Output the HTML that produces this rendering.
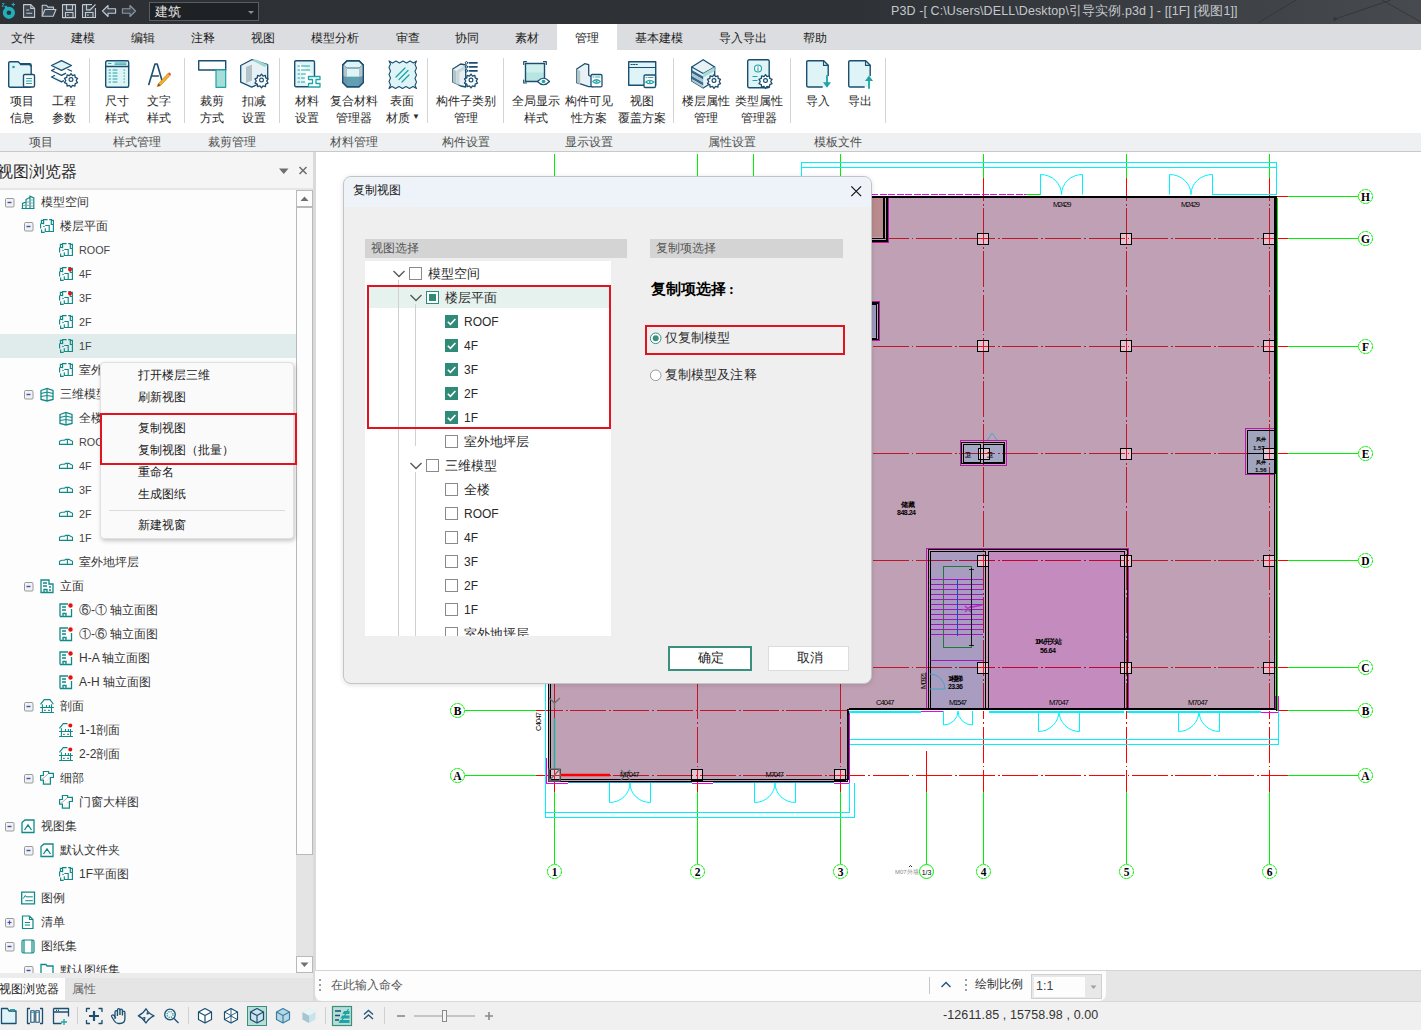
<!DOCTYPE html>
<html><head><meta charset="utf-8">
<style>
*{margin:0;padding:0;box-sizing:border-box}
html,body{width:1421px;height:1030px;overflow:hidden;background:#fff;font-family:"Liberation Sans",sans-serif;font-size:12px;color:#333}
.a{position:absolute}
svg{position:absolute;overflow:visible}
#title{left:0;top:0;width:1421px;height:24px;background:linear-gradient(90deg,#2d3135 0%,#2e3236 60%,#383c40 78%,#474b4f 100%);overflow:hidden}
#menu{left:0;top:24px;width:1421px;height:26px;background:#dcdde0}
#menu span{position:absolute;top:6px;font-size:12px;color:#1e1e1e;white-space:nowrap}
#ribbon{left:0;top:50px;width:1421px;height:83px;background:#fff}
#glabels{left:0;top:133px;width:1421px;height:19px;background:#eef0f1;border-bottom:1px solid #c9c9c9}
#glabels span{position:absolute;top:1px;font-size:12px;color:#505050;white-space:nowrap;transform:translateX(-50%)}
.rb{position:absolute;top:93px;font-size:12px;color:#2a2a2a;text-align:center;line-height:17px;white-space:nowrap;transform:translateX(-50%)}
.sep{position:absolute;top:58px;width:1px;height:65px;background:#d4d4d4}
.tr{font-size:12px;line-height:24px;color:#363636;white-space:nowrap}
.mi{font-size:12px;line-height:18px;color:#1a1a1a;white-space:nowrap}
.dt{font-size:12.5px;line-height:24px;color:#2a2a2a;white-space:nowrap}
.lt{font-size:12px}
.cb{position:absolute;width:13px;height:13px;border:1px solid #8a8a8a;background:#fff}
.cbc{position:absolute;width:13px;height:13px;background:#2f8a78}

</style></head><body>
<div id="title" class="a">
<svg width="1421" height="24" style="left:0;top:0">
 <g stroke="#34383c" stroke-width="1" fill="none"><path d="M1258 23L1296 0M1335 19L1391 0M1382 0L1421 22"/><circle cx="1335" cy="19" r="1.5" fill="#34383c"/></g>
 <!-- logo -->
 <circle cx="8.9" cy="12.8" r="4.2" fill="none" stroke="#1fb0bc" stroke-width="3.8"/>
 <rect x="4.8" y="5.8" width="2.4" height="2.4" fill="#1fb0bc"/>
 <path d="M2 3.6h2.2l-2.2 2.6h2.4" stroke="#1fb0bc" stroke-width="0.9" fill="none"/>
 <path d="M13.3 2.8v3.4M11.6 4.5h3.4" stroke="#1fb0bc" stroke-width="1.1"/>
 <g fill="#3b4650" stroke="#c3c9ce" stroke-width="1.1" stroke-linejoin="round">
  <path d="M23.6 4.6h7.2l3.8 3.8v9h-11z"/>
  <path d="M42.2 16.3v-11h4.3l1.5 1.8h5.5v2.2"/>
  <path d="M42.2 16.3l2.8-6.8h11l-2.8 6.8z"/>
  <path d="M62.5 4.6h13v13h-13z"/>
  <path d="M82.5 4.6h9.5M95.5 8v9.5h-13v-12.9"/>
  <path d="M102.5 11l5.5-5.5v3.3h7.6v4.4h-7.6v3.3z"/>
  <path d="M135.5 11l-5.5-5.5v3.3h-7.6v4.4h7.6v3.3z" stroke="#8f979e"/>
 </g>
 <g stroke="#c3c9ce" stroke-width="1.1" fill="none"><path d="M30.8 4.6v3.8h3.8M26.2 10h3M26.2 13.3h6M66.5 4.6v5.3h6v-5.3M65.5 17.5v-5h7.5v5M86.5 4.6v5.3h3.5M85.5 17.5v-5h7.5v5M89.5 10.5l6-6"/></g>
 <g fill="#c3c9ce"><rect x="67.2" y="14.3" width="1.4" height="1.4"/><rect x="87.2" y="14.3" width="1.4" height="1.4"/></g>
</svg>
<div class="a" style="left:149px;top:2px;width:110px;height:19px;background:#1f2225;border:1px solid #5a5e63"></div>
<div class="a" style="left:155px;top:3px;font-size:13px;color:#e6e6e6">建筑</div>
<svg width="10" height="6" style="left:247px;top:10px"><path d="M1 1h6l-3 3z" fill="#8c8f93"/></svg>
<div class="a" style="left:891px;top:3px;font-size:12.5px;color:#c4c8cc;white-space:nowrap;letter-spacing:0.1px">P3D -[ C:\Users\DELL\Desktop\引导实例.p3d ] - [[1F] [视图1]]</div>
</div>
<div id="menu" class="a">
<span style="left:11px">文件</span><span style="left:71px">建模</span><span style="left:131px">编辑</span><span style="left:191px">注释</span><span style="left:251px">视图</span><span style="left:311px">模型分析</span><span style="left:396px">审查</span><span style="left:455px">协同</span><span style="left:515px">素材</span>
<div class="a" style="left:557px;top:0;width:60px;height:26px;background:#fff"></div><span style="left:575px">管理</span><span style="left:635px">基本建模</span><span style="left:719px">导入导出</span><span style="left:803px">帮助</span>
</div>
<div id="ribbon" class="a"></div>
<svg width="900" height="40" style="left:0;top:55px" viewBox="0 55 900 40">
<defs>
<g id="gear"><path d="M0-6.2l1.5 2 2.4-.7.3 2.5 2.3 1-1.3 2.1 1.3 2.1-2.3 1-.3 2.5-2.4-.7-1.5 2-1.5-2-2.4.7-.3-2.5-2.3-1 1.3-2.1-1.3-2.1 2.3-1 .3-2.5 2.4.7z" fill="#fff" stroke="#1b4f72" stroke-width="1.3" stroke-linejoin="round" transform="translate(0,0.3)"/><circle r="1.9" fill="none" stroke="#1b4f72" stroke-width="1.2"/></g>
<g id="eye"><path d="M-6 0q6-6.5 12 0q-6 6.5-12 0z" fill="#fff" stroke="#1b4f72" stroke-width="1.2"/><circle r="1.8" fill="#1ea3a8"/></g>
</defs>
<g stroke-linejoin="round" stroke-linecap="round">
<!-- 1 项目信息 folder + doc -->
<g transform="translate(8,61)">
 <path d="M0.7 2.2q0-1.5 1.5-1.5h8l2 2h9.5q1.5 0 1.5 1.5v20.5q0 1.5-1.5 1.5h-19.5q-1.5 0-1.5-1.5z" fill="#dff4f7" stroke="#1b4f72" stroke-width="1.4"/>
 <path d="M12.5 3.5h8.5q1.5 0 1.5 1.5" fill="none" stroke="#1b4f72" stroke-width="1.3"/>
 <circle cx="5.5" cy="6" r="1.3" fill="#1ea3a8"/>
 <rect x="15.5" y="13.5" width="11" height="12.5" rx="1.3" fill="#fff" stroke="#1b4f72" stroke-width="1.4"/>
 <path d="M18.5 17.5h5M18.5 20h5M18.5 22.5h5" stroke="#1ea3a8" stroke-width="1.1"/>
</g>
<!-- 2 工程参数 layers + gear -->
<g transform="translate(51,60)">
 <path d="M10.5 0.7l10 4.8-10 4.8-10-4.8z" fill="#dff4f7" stroke="#1b4f72" stroke-width="1.3"/>
 <path d="M3.5 9l-3 1.5 10 4.8 4-2M17 9.5l3.5 1.5" fill="none" stroke="#1b4f72" stroke-width="1.3"/>
 <path d="M3.5 15.5l-3 1.5 10 4.8 2-1" fill="#dff4f7" stroke="#1b4f72" stroke-width="1.3"/>
 <use href="#gear" transform="translate(20,19.5)"/>
</g>
<!-- 3 尺寸样式 table -->
<g transform="translate(105,60)">
 <rect x="0.7" y="0.7" width="23" height="26.5" rx="1.5" fill="#dff4f7" stroke="#1b4f72" stroke-width="1.4"/>
 <path d="M0.7 6.5h23" stroke="#1b4f72" stroke-width="1.3"/>
 <path d="M3.5 3.5h2.5M10 3h11M10 4.3h11" stroke="#1ea3a8" stroke-width="0.9"/>
 <path d="M4 10h1.5M8 10h4M19 10h.5M4 13h1.5M8 13h4M19 13h.5M4 16h1.5M8 16h4M19 16h.5M4 19h1.5M8 19h4M19 19h.5M4 22h1.5M8 22h4M19 22h.5" stroke="#1ea3a8" stroke-width="1.1"/>
</g>
<!-- 4 文字样式 A + pencil -->
<g transform="translate(148,63)">
 <path d="M0.8 21.5l6.2-20.5h2.2l4.8 16.5" fill="none" stroke="#1b4f72" stroke-width="1.6"/>
 <path d="M4 13h6.5" stroke="#1b4f72" stroke-width="1.4"/>
 <path d="M10.5 20.5l9.5-10 2 2-9.5 10-3 1z" fill="#f5b324" stroke="#c8741a" stroke-width="0.7"/>
 <path d="M20 10.5l1.2-1.2 2 2-1.2 1.2z" fill="#e84e4e"/>
 <path d="M10.5 20.5l-0.7 2.8 2.8-0.8z" fill="#6b4a2a"/>
</g>
<!-- 5 裁剪方式 -->
<g transform="translate(198,60)">
 <rect x="0.7" y="0.7" width="27" height="9.3" fill="#fff" stroke="#1b4f72" stroke-width="1.4"/>
 <rect x="18" y="10" width="9.7" height="17.3" fill="#a6ddd8" stroke="#1ea3a8" stroke-width="1.2"/>
</g>
<!-- 6 扣减设置 -->
<g transform="translate(240,59)">
 <path d="M0.7 6.5l11-5.8 16 5v15l-16 7.5-11-5z" fill="#e8f2f4" stroke="#1b4f72" stroke-width="1.3"/>
 <path d="M6 8l6-2.5v16l-6 2.5z" fill="#b3c4c9"/>
 <path d="M11.5 1l4.5-0.5 12 5.5-3.5 2z" fill="#9ad6d0"/>
 <use href="#gear" transform="translate(21.5,21)"/>
</g>
<!-- 7 材料设置 -->
<g transform="translate(294,60)">
 <path d="M2 0.7h17q1.5 0 1.5 1.5v14M14 26.7h-12q-1.3 0-1.3-1.3v-23.2q0-1.5 1.3-1.5" fill="#dff4f7" stroke="#1b4f72" stroke-width="1.4"/>
 <path d="M4 6h1.5M7.5 6h8M4 10h1.5M7.5 10h8M4 14h1.5M7.5 14h4M4 18h1.5M7.5 18h3M4 22h1.5M7.5 22h3" stroke="#1ea3a8" stroke-width="1.1"/>
 <path d="M14.5 16.5h11.5v3h-4v4h4v3.5h-11.5v-3.5h4v-4h-4z" fill="#fff" stroke="#1ea3a8" stroke-width="1.3"/>
</g>
<!-- 8 复合材料管理器 hex prism -->
<g transform="translate(342,60)">
 <path d="M5 0.7h12l4.3 4.3v17.5l-4.3 4.3h-12l-4.3-4.3v-17.5z" fill="#dff4f7" stroke="#1b4f72" stroke-width="1.4"/>
 <path d="M1 5l4 3h12l4-3" fill="none" stroke="#1b4f72" stroke-width="0.8"/>
 <path d="M1 5l4 3v18.5l-4.3-4z" fill="#b3c4c9"/>
 <path d="M21 5l-4 3v18.5l4.3-4z" fill="#b3c4c9"/>
 <path d="M5 16h12v10.5h-12z" fill="#a6ddd8"/>
 <path d="M0.7 16l4.3 1h12l4.3-1v6.5l-4.3 4.3h-12l-4.3-4.3z" fill="#2b6c94" opacity="0.55"/>
 <path d="M5 0.7h12l4.3 4.3v17.5l-4.3 4.3h-12l-4.3-4.3v-17.5z" fill="none" stroke="#1b4f72" stroke-width="1.4"/>
</g>
<!-- 9 表面材质 -->
<g transform="translate(388,60)">
 <path d="M1 1l3.5 2 3.5-2 3.5 2 3.5-2 3.5 2 3.5-2 3.5 2 3-2-1.5 3.5 1.5 3.5-1.5 3.5 1.5 3.5-1.5 3.5 1.5 3.5-1.5 3.5 1.5 3-3.5-2-3.5 2-3.5-2-3.5 2-3.5-2-3.5 2-3.5-2-3 2 1.5-3.5-1.5-3.5 1.5-3.5-1.5-3.5 1.5-3.5-1.5-3.5 1.5-3.5z" fill="#dff4f7" stroke="#1b4f72" stroke-width="1.1"/>
 <path d="M8 17l9-9M11 19.5l9-9M14 22l7-7" stroke="#1ea3a8" stroke-width="1.3"/>
</g>
<!-- 10 构件子类别 -->
<g transform="translate(452,61)">
 <path d="M0.7 8l8-5 5 1v22l-5-1-8-4z" fill="#e8f2f4" stroke="#1b4f72" stroke-width="1.3"/>
 <path d="M0.7 8l3.5 2v13l-3.5-2z" fill="#b3c4c9"/>
 <path d="M4.2 10l9.3-6v4l-6 3.5v12l-3.3 0z" fill="#c9d7db"/>
 <circle cx="14.5" cy="1.8" r="1.2" fill="none" stroke="#1b4f72" stroke-width="1"/><circle cx="14.5" cy="5.8" r="1.2" fill="none" stroke="#1b4f72" stroke-width="1"/><circle cx="14.5" cy="9.8" r="1.2" fill="none" stroke="#1b4f72" stroke-width="1"/>
 <path d="M17.5 1.8h7.5M17.5 5.8h7.5M17.5 9.8h7.5" stroke="#1b4f72" stroke-width="1.8"/>
 <use href="#gear" transform="translate(19,19)"/>
</g>
<!-- 11 全局显示样式 -->
<g transform="translate(523,61)">
 <path d="M0.7 3.5v-2.8h2.8M20.5 0.7h2.8v2.8M0.7 19v3h2.8" fill="none" stroke="#1b4f72" stroke-width="1.2"/>
 <rect x="2.5" y="2.5" width="19" height="18" fill="#b6e5e2" stroke="#1b4f72" stroke-width="1.4"/>
 <path d="M3.5 3.5h17v8h-17z" fill="#dff4f7" opacity="0.6"/>
 <use href="#eye" transform="translate(20.5,20.5)"/>
</g>
<!-- 12 构件可见性方案 -->
<g transform="translate(576,61)">
 <path d="M0.7 8l8-5.3 4 1v10.5l4.5 2.5v9l-4.5 0-12-4z" fill="#e8f2f4" stroke="#1b4f72" stroke-width="1.3"/>
 <path d="M0.7 8l3.5 2v13.5l-3.5-2z" fill="#b3c4c9"/>
 <rect x="15" y="13.5" width="11" height="12.3" rx="1.3" fill="#fff" stroke="#1b4f72" stroke-width="1.3"/>
 <path d="M17 16h1M19.5 16h4.5" stroke="#1ea3a8" stroke-width="0.9"/>
 <path d="M16.8 20.5q3.7-3.5 7.4 0q-3.7 3.5-7.4 0z" fill="none" stroke="#1ea3a8" stroke-width="1.2"/><circle cx="20.5" cy="20.5" r="1" fill="#1ea3a8"/>
</g>
<!-- 13 视图覆盖方案 -->
<g transform="translate(628,61)">
 <rect x="0.7" y="0.7" width="27" height="23.5" fill="#dff4f7" stroke="#1b4f72" stroke-width="1.4"/>
 <path d="M0.7 6.5h27" stroke="#1b4f72" stroke-width="1.2"/>
 <path d="M3 3.5h1.3M5.5 3.5h1.3M8 3.5h1.3" stroke="#1b4f72" stroke-width="1"/>
 <rect x="16" y="14" width="11.5" height="12.5" rx="1.3" fill="#fff" stroke="#1b4f72" stroke-width="1.3"/>
 <path d="M18 16.5h1M20.5 16.5h4.5" stroke="#1ea3a8" stroke-width="0.9"/>
 <path d="M17.8 21q4-3.5 8 0q-4 3.5-8 0z" fill="none" stroke="#1ea3a8" stroke-width="1.2"/><circle cx="21.8" cy="21" r="1" fill="#1ea3a8"/>
</g>
<!-- 14 楼层属性管理 -->
<g transform="translate(691,59)">
 <path d="M0.7 8l11.5-7.3 11.5 7.3v14l-11.5 7-11.5-7z" fill="#e8f2f4" stroke="#1b4f72" stroke-width="1.3"/>
 <path d="M0.7 8l11.5 6.5 11.5-6.5" fill="none" stroke="#1b4f72" stroke-width="1.1"/>
 <path d="M0.7 11l11.5 6.5v3l-11.5-6.5zM0.7 17l11.5 6.5v3l-11.5-6.5z" fill="#2b6c94"/>
 <path d="M0.7 14l11.5 6.5v3l-11.5-6.5zM0.7 20l11.5 6.5v2.5l-11.5-7z" fill="#b3c4c9"/>
 <path d="M12.2 14.5l11.5-6.5v4l-11.5 6.5z" fill="#a6ddd8"/>
 <use href="#gear" transform="translate(23,21.5)"/>
</g>
<!-- 15 类型属性管理器 -->
<g transform="translate(747,59)">
 <rect x="0.7" y="0.7" width="21.5" height="28" rx="1.5" fill="#dff4f7" stroke="#1b4f72" stroke-width="1.4"/>
 <circle cx="11" cy="9.5" r="3.5" fill="#fff" stroke="#1ea3a8" stroke-width="1.1"/>
 <path d="M11 8.8v3M11 7.3v.3" stroke="#1ea3a8" stroke-width="1.1"/>
 <path d="M6 17.5h4M6 21.5h4" stroke="#1ea3a8" stroke-width="1.2"/>
 <use href="#gear" transform="translate(18.5,21.5)"/>
</g>
<!-- 16 导入 -->
<g transform="translate(806,60)">
 <path d="M2.2 0.7h15.5l4.5 4.5v20.3q0 1.5-1.5 1.5h-18.5q-1.5 0-1.5-1.5v-23.3q0-1.5 1.5-1.5z" fill="#dff4f7"/>
 <path d="M22.2 15.5v-10.3l-4.5-4.5h-15.5q-1.5 0-1.5 1.5v23.3q0 1.5 1.5 1.5h14" fill="none" stroke="#1b4f72" stroke-width="1.4"/>
 <path d="M17.5 0.7v4.7h4.7" fill="none" stroke="#1b4f72" stroke-width="1.1"/>
 <path d="M21 16v7" stroke="#1ea3a8" stroke-width="1.8"/><path d="M17 22.3h8l-4 5.5z" fill="#1ea3a8"/>
</g>
<!-- 17 导出 -->
<g transform="translate(848,60)">
 <path d="M2.2 0.7h15.5l4.5 4.5v20.3q0 1.5-1.5 1.5h-18.5q-1.5 0-1.5-1.5v-23.3q0-1.5 1.5-1.5z" fill="#dff4f7"/>
 <path d="M22.2 15.5v-10.3l-4.5-4.5h-15.5q-1.5 0-1.5 1.5v23.3q0 1.5 1.5 1.5h14" fill="none" stroke="#1b4f72" stroke-width="1.4"/>
 <path d="M17.5 0.7v4.7h4.7" fill="none" stroke="#1b4f72" stroke-width="1.1"/>
 <path d="M21 20v8" stroke="#1ea3a8" stroke-width="1.8"/><path d="M17 21h8l-4-5.5z" fill="#1ea3a8"/>
</g>
</g>
</svg>
<div class="rb" style="left:22px">项目<br>信息</div>
<div class="rb" style="left:64px">工程<br>参数</div>
<div class="sep" style="left:89px"></div>
<div class="rb" style="left:117px">尺寸<br>样式</div>
<div class="rb" style="left:159px">文字<br>样式</div>
<div class="sep" style="left:184px"></div>
<div class="rb" style="left:212px">裁剪<br>方式</div>
<div class="rb" style="left:254px">扣减<br>设置</div>
<div class="sep" style="left:279px"></div>
<div class="rb" style="left:307px">材料<br>设置</div>
<div class="rb" style="left:354px">复合材料<br>管理器</div>
<div class="rb" style="left:402px">表面<br>材质<span style="font-size:8px;position:relative;top:-3px;left:2px">▼</span></div>
<div class="sep" style="left:427px"></div>
<div class="rb" style="left:466px">构件子类别<br>管理</div>
<div class="sep" style="left:503px"></div>
<div class="rb" style="left:536px">全局显示<br>样式</div>
<div class="rb" style="left:589px">构件可见<br>性方案</div>
<div class="rb" style="left:642px">视图<br>覆盖方案</div>
<div class="sep" style="left:673px"></div>
<div class="rb" style="left:706px">楼层属性<br>管理</div>
<div class="rb" style="left:759px">类型属性<br>管理器</div>
<div class="sep" style="left:790px"></div>
<div class="rb" style="left:818px">导入</div>
<div class="rb" style="left:860px">导出</div>
<div class="sep" style="left:885px"></div>
<div id="glabels" class="a">
<span style="left:41px">项目</span><span style="left:137px">样式管理</span><span style="left:232px">裁剪管理</span><span style="left:354px">材料管理</span><span style="left:466px">构件设置</span><span style="left:589px">显示设置</span><span style="left:732px">属性设置</span><span style="left:838px">模板文件</span>
</div>
<div class="a" style="left:0;top:152px;width:313px;height:36px;background:#f5f5f5"></div>
<div class="a" style="left:-3px;top:162px;font-size:15.5px;color:#2b2b2b;white-space:nowrap">视图浏览器</div>
<svg width="30" height="12" style="left:278px;top:165px"><path d="M1 3.5h9.5l-4.75 5.5z" fill="#6e6e6e"/><path d="M21.5 2l7 7M28.5 2l-7 7" stroke="#6e6e6e" stroke-width="1.5"/></svg>
<div class="a" style="left:0;top:188px;width:313px;height:2px;background:#e6e6e6"></div>
<div class="a" id="tree" style="left:0;top:190px;width:296px;height:783px;background:#fdfdfd;overflow:hidden">
<div class="a" style="left:0;top:144px;width:296px;height:24px;background:#dfeceb"></div>
<svg width="10" height="10" style="left:5px;top:8px"><rect x="0.5" y="0.5" width="8.5" height="8.5" rx="1" fill="#f2f2f2" stroke="#9a9a9a"/><path d="M2.5 4.5h4" stroke="#3d4fb5" stroke-width="1.4"/></svg>
<svg width="14" height="15" style="left:21px;top:5px"><path d="M1.5 13.5V8.5l3.5-1.5V13.5M5 13.5V4.5l4-2.2V13.5M9 13.5V1.2l3.8 1.8V13.5M0.5 13.5h13" fill="none" stroke="#0f8a88" stroke-width="1.2"/><path d="M2.3 10.5h2M5.8 7h2.5M5.8 10.3h2.5M9.8 5h2.3M9.8 8h2.3M9.8 11h2.3" stroke="#8a9a9a" stroke-width="0.9"/></svg>
<div class="a tr" style="left:41px;top:0px">模型空间</div>
<svg width="10" height="10" style="left:24px;top:32px"><rect x="0.5" y="0.5" width="8.5" height="8.5" rx="1" fill="#f2f2f2" stroke="#9a9a9a"/><path d="M2.5 4.5h4" stroke="#3d4fb5" stroke-width="1.4"/></svg>
<svg width="14" height="15" style="left:40px;top:29px"><path d="M7.6 0.6H3.6V5.3M3.6 1.3H1.4V4.3H3.6M0.6 4.6V9.6M1.6 10.6V13.3H4.7M9.2 0.6H11.4V1.3H13.4V12.5H5.3V9.2M11.3 1.3V5.5H13.4M5.3 6.5H9.2V12.5M3.2 7.5H4.7" fill="none" stroke="#0f8a88" stroke-width="1.15"/></svg>
<div class="a tr" style="left:60px;top:24px">楼层平面</div>
<svg width="14" height="15" style="left:59px;top:53px"><path d="M7.6 0.6H3.6V5.3M3.6 1.3H1.4V4.3H3.6M0.6 4.6V9.6M1.6 10.6V13.3H4.7M9.2 0.6H11.4V1.3H13.4V12.5H5.3V9.2M11.3 1.3V5.5H13.4M5.3 6.5H9.2V12.5M3.2 7.5H4.7" fill="none" stroke="#0f8a88" stroke-width="1.15"/></svg>
<div class="a tr" style="left:79px;top:48px;font-size:10.8px;color:#444">ROOF</div>
<svg width="14" height="15" style="left:59px;top:77px"><path d="M7.6 0.6H3.6V5.3M3.6 1.3H1.4V4.3H3.6M0.6 4.6V9.6M1.6 10.6V13.3H4.7M9.2 0.6H11.4V1.3H13.4V12.5H5.3V9.2M11.3 1.3V5.5H13.4M5.3 6.5H9.2V12.5M3.2 7.5H4.7" fill="none" stroke="#0f8a88" stroke-width="1.15"/><circle cx="11" cy="2.5" r="2" fill="#e81010"/></svg>
<div class="a tr" style="left:79px;top:72px;font-size:10.8px;color:#444">4F</div>
<svg width="14" height="15" style="left:59px;top:101px"><path d="M7.6 0.6H3.6V5.3M3.6 1.3H1.4V4.3H3.6M0.6 4.6V9.6M1.6 10.6V13.3H4.7M9.2 0.6H11.4V1.3H13.4V12.5H5.3V9.2M11.3 1.3V5.5H13.4M5.3 6.5H9.2V12.5M3.2 7.5H4.7" fill="none" stroke="#0f8a88" stroke-width="1.15"/><circle cx="11" cy="2.5" r="2" fill="#e81010"/></svg>
<div class="a tr" style="left:79px;top:96px;font-size:10.8px;color:#444">3F</div>
<svg width="14" height="15" style="left:59px;top:125px"><path d="M7.6 0.6H3.6V5.3M3.6 1.3H1.4V4.3H3.6M0.6 4.6V9.6M1.6 10.6V13.3H4.7M9.2 0.6H11.4V1.3H13.4V12.5H5.3V9.2M11.3 1.3V5.5H13.4M5.3 6.5H9.2V12.5M3.2 7.5H4.7" fill="none" stroke="#0f8a88" stroke-width="1.15"/></svg>
<div class="a tr" style="left:79px;top:120px;font-size:10.8px;color:#444">2F</div>
<svg width="14" height="15" style="left:59px;top:149px"><path d="M7.6 0.6H3.6V5.3M3.6 1.3H1.4V4.3H3.6M0.6 4.6V9.6M1.6 10.6V13.3H4.7M9.2 0.6H11.4V1.3H13.4V12.5H5.3V9.2M11.3 1.3V5.5H13.4M5.3 6.5H9.2V12.5M3.2 7.5H4.7" fill="none" stroke="#0f8a88" stroke-width="1.15"/></svg>
<div class="a tr" style="left:79px;top:144px;font-size:10.8px;color:#444">1F</div>
<svg width="14" height="15" style="left:59px;top:173px"><path d="M7.6 0.6H3.6V5.3M3.6 1.3H1.4V4.3H3.6M0.6 4.6V9.6M1.6 10.6V13.3H4.7M9.2 0.6H11.4V1.3H13.4V12.5H5.3V9.2M11.3 1.3V5.5H13.4M5.3 6.5H9.2V12.5M3.2 7.5H4.7" fill="none" stroke="#0f8a88" stroke-width="1.15"/></svg>
<div class="a tr" style="left:79px;top:168px">室外地坪层</div>
<svg width="10" height="10" style="left:24px;top:200px"><rect x="0.5" y="0.5" width="8.5" height="8.5" rx="1" fill="#f2f2f2" stroke="#9a9a9a"/><path d="M2.5 4.5h4" stroke="#3d4fb5" stroke-width="1.4"/></svg>
<svg width="14" height="15" style="left:40px;top:197px"><path d="M1 3.5l6-2 6 2v9l-6 1.5-6-1.5z" fill="none" stroke="#0f8a88" stroke-width="1.3"/><path d="M1 6.5l6-1.5 6 1.5M1 9.5l6-1 6 1M7 1.5v12.5" fill="none" stroke="#0f8a88" stroke-width="1.2"/></svg>
<div class="a tr" style="left:60px;top:192px">三维模型</div>
<svg width="14" height="15" style="left:59px;top:221px"><path d="M1 3.5l6-2 6 2v9l-6 1.5-6-1.5z" fill="none" stroke="#0f8a88" stroke-width="1.3"/><path d="M1 6.5l6-1.5 6 1.5M1 9.5l6-1 6 1M7 1.5v12.5" fill="none" stroke="#0f8a88" stroke-width="1.2"/></svg>
<div class="a tr" style="left:79px;top:216px">全楼</div>
<svg width="14" height="15" style="left:59px;top:245px"><path d="M0.5 6.3V9.4H13.5V6.3L11.5 5.3L10 4.4H6.9L5.3 5.3H2.8ZM8.4 4.4V9.4" fill="none" stroke="#0f8a88" stroke-width="1.1"/></svg>
<div class="a tr" style="left:79px;top:240px;font-size:10.8px;color:#444">ROOF</div>
<svg width="14" height="15" style="left:59px;top:269px"><path d="M0.5 6.3V9.4H13.5V6.3L11.5 5.3L10 4.4H6.9L5.3 5.3H2.8ZM8.4 4.4V9.4" fill="none" stroke="#0f8a88" stroke-width="1.1"/></svg>
<div class="a tr" style="left:79px;top:264px;font-size:10.8px;color:#444">4F</div>
<svg width="14" height="15" style="left:59px;top:293px"><path d="M0.5 6.3V9.4H13.5V6.3L11.5 5.3L10 4.4H6.9L5.3 5.3H2.8ZM8.4 4.4V9.4" fill="none" stroke="#0f8a88" stroke-width="1.1"/></svg>
<div class="a tr" style="left:79px;top:288px;font-size:10.8px;color:#444">3F</div>
<svg width="14" height="15" style="left:59px;top:317px"><path d="M0.5 6.3V9.4H13.5V6.3L11.5 5.3L10 4.4H6.9L5.3 5.3H2.8ZM8.4 4.4V9.4" fill="none" stroke="#0f8a88" stroke-width="1.1"/></svg>
<div class="a tr" style="left:79px;top:312px;font-size:10.8px;color:#444">2F</div>
<svg width="14" height="15" style="left:59px;top:341px"><path d="M0.5 6.3V9.4H13.5V6.3L11.5 5.3L10 4.4H6.9L5.3 5.3H2.8ZM8.4 4.4V9.4" fill="none" stroke="#0f8a88" stroke-width="1.1"/></svg>
<div class="a tr" style="left:79px;top:336px;font-size:10.8px;color:#444">1F</div>
<svg width="14" height="15" style="left:59px;top:365px"><path d="M0.5 6.3V9.4H13.5V6.3L11.5 5.3L10 4.4H6.9L5.3 5.3H2.8ZM8.4 4.4V9.4" fill="none" stroke="#0f8a88" stroke-width="1.1"/></svg>
<div class="a tr" style="left:79px;top:360px">室外地坪层</div>
<svg width="10" height="10" style="left:24px;top:392px"><rect x="0.5" y="0.5" width="8.5" height="8.5" rx="1" fill="#f2f2f2" stroke="#9a9a9a"/><path d="M2.5 4.5h4" stroke="#3d4fb5" stroke-width="1.4"/></svg>
<svg width="14" height="15" style="left:40px;top:389px"><path d="M1 13.5v-12.5h8v4h4v8.5zM3 4h4M3 7h4M9 8h2M9 11h2M4 13.5v-3h3v3" fill="none" stroke="#0f8a88" stroke-width="1.3"/></svg>
<div class="a tr" style="left:60px;top:384px">立面</div>
<svg width="14" height="15" style="left:59px;top:413px"><path d="M1 13.5v-12.5h8M12.5 6v7.5h-11.5M3 4h4M3 7h4M4 13.5v-3h3v3" fill="none" stroke="#0f8a88" stroke-width="1.3"/><circle cx="11.5" cy="2.5" r="2.2" fill="#e81010"/></svg>
<div class="a tr" style="left:79px;top:408px">⑥-① 轴立面图</div>
<svg width="14" height="15" style="left:59px;top:437px"><path d="M1 13.5v-12.5h8M12.5 6v7.5h-11.5M3 4h4M3 7h4M4 13.5v-3h3v3" fill="none" stroke="#0f8a88" stroke-width="1.3"/><circle cx="11.5" cy="2.5" r="2.2" fill="#e81010"/></svg>
<div class="a tr" style="left:79px;top:432px">①-⑥ 轴立面图</div>
<svg width="14" height="15" style="left:59px;top:461px"><path d="M1 13.5v-12.5h8M12.5 6v7.5h-11.5M3 4h4M3 7h4M4 13.5v-3h3v3" fill="none" stroke="#0f8a88" stroke-width="1.3"/><circle cx="11.5" cy="2.5" r="2.2" fill="#e81010"/></svg>
<div class="a tr" style="left:79px;top:456px">H-A 轴立面图</div>
<svg width="14" height="15" style="left:59px;top:485px"><path d="M1 13.5v-12.5h8M12.5 6v7.5h-11.5M3 4h4M3 7h4M4 13.5v-3h3v3" fill="none" stroke="#0f8a88" stroke-width="1.3"/><circle cx="11.5" cy="2.5" r="2.2" fill="#e81010"/></svg>
<div class="a tr" style="left:79px;top:480px">A-H 轴立面图</div>
<svg width="10" height="10" style="left:24px;top:512px"><rect x="0.5" y="0.5" width="8.5" height="8.5" rx="1" fill="#f2f2f2" stroke="#9a9a9a"/><path d="M2.5 4.5h4" stroke="#3d4fb5" stroke-width="1.4"/></svg>
<svg width="14" height="15" style="left:40px;top:509px"><path d="M0.5 5.3L4.2 0.6H10L13.4 5.3M2.4 5.3V13.5M11.5 5.3V13.5M0.1 8.5H13.9M0.1 13.5H13.9M6.5 6V8.3M9.4 6V8.3M4.2 11.4H5.7M8.2 11.4H9.8" fill="none" stroke="#0f8a88" stroke-width="1.1"/></svg>
<div class="a tr" style="left:60px;top:504px">剖面</div>
<svg width="14" height="15" style="left:59px;top:533px"><path d="M0.5 5.3L4.2 0.6H8.5M13.4 5.3M2.4 5.3V13.5M11.5 6V13.5M0.1 8.5H13.9M0.1 13.5H13.9M6.5 6V8.3M9.4 6V8.3M4.2 11.4H5.7M8.2 11.4H9.8" fill="none" stroke="#0f8a88" stroke-width="1.1"/><circle cx="11.3" cy="2.5" r="2" fill="#e81010"/></svg>
<div class="a tr" style="left:79px;top:528px">1-1剖面</div>
<svg width="14" height="15" style="left:59px;top:557px"><path d="M0.5 5.3L4.2 0.6H8.5M13.4 5.3M2.4 5.3V13.5M11.5 6V13.5M0.1 8.5H13.9M0.1 13.5H13.9M6.5 6V8.3M9.4 6V8.3M4.2 11.4H5.7M8.2 11.4H9.8" fill="none" stroke="#0f8a88" stroke-width="1.1"/><circle cx="11.3" cy="2.5" r="2" fill="#e81010"/></svg>
<div class="a tr" style="left:79px;top:552px">2-2剖面</div>
<svg width="10" height="10" style="left:24px;top:584px"><rect x="0.5" y="0.5" width="8.5" height="8.5" rx="1" fill="#f2f2f2" stroke="#9a9a9a"/><path d="M2.5 4.5h4" stroke="#3d4fb5" stroke-width="1.4"/></svg>
<svg width="14" height="15" style="left:40px;top:581px"><path d="M3.4 0.5H8.6V2.4H13.4V6.5H10.4V13.2H3.4V9.2H0.6V4.5H3.4Z" fill="none" stroke="#0f8a88" stroke-width="1.2"/><path d="M2 8.2L8.4 2.8" stroke="#aaa" stroke-width="1"/><path d="M4.5 12L12 4.5" stroke="#c8a0a0" stroke-width="0.6" stroke-dasharray="1 1"/></svg>
<div class="a tr" style="left:60px;top:576px">细部</div>
<svg width="14" height="15" style="left:59px;top:605px"><path d="M3.4 0.5H8.6V2.4H13.4V6.5H10.4V13.2H3.4V9.2H0.6V4.5H3.4Z" fill="none" stroke="#0f8a88" stroke-width="1.2"/><path d="M2 8.2L8.4 2.8" stroke="#aaa" stroke-width="1"/><path d="M4.5 12L12 4.5" stroke="#c8a0a0" stroke-width="0.6" stroke-dasharray="1 1"/></svg>
<div class="a tr" style="left:79px;top:600px">门窗大样图</div>
<svg width="10" height="10" style="left:5px;top:632px"><rect x="0.5" y="0.5" width="8.5" height="8.5" rx="1" fill="#f2f2f2" stroke="#9a9a9a"/><path d="M2.5 4.5h4" stroke="#3d4fb5" stroke-width="1.4"/></svg>
<svg width="14" height="15" style="left:21px;top:629px"><path d="M1 3.5l3-2.5h9v12.5h-12zM3.5 11l3.5-5 3.5 5" fill="none" stroke="#0f8a88" stroke-width="1.3"/></svg>
<div class="a tr" style="left:41px;top:624px">视图集</div>
<svg width="10" height="10" style="left:24px;top:656px"><rect x="0.5" y="0.5" width="8.5" height="8.5" rx="1" fill="#f2f2f2" stroke="#9a9a9a"/><path d="M2.5 4.5h4" stroke="#3d4fb5" stroke-width="1.4"/></svg>
<svg width="14" height="15" style="left:40px;top:653px"><path d="M1 3.5l3-2.5h9v12.5h-12zM3.5 11l3.5-5 3.5 5" fill="none" stroke="#0f8a88" stroke-width="1.3"/></svg>
<div class="a tr" style="left:60px;top:648px">默认文件夹</div>
<svg width="14" height="15" style="left:59px;top:677px"><path d="M7.6 0.6H3.6V5.3M3.6 1.3H1.4V4.3H3.6M0.6 4.6V9.6M1.6 10.6V13.3H4.7M9.2 0.6H11.4V1.3H13.4V12.5H5.3V9.2M11.3 1.3V5.5H13.4M5.3 6.5H9.2V12.5M3.2 7.5H4.7" fill="none" stroke="#0f8a88" stroke-width="1.15"/></svg>
<div class="a tr" style="left:79px;top:672px">1F平面图</div>
<svg width="14" height="15" style="left:21px;top:701px"><path d="M0.7 1.2h12.8v11.6h-12.8z" fill="none" stroke="#0f8a88" stroke-width="1.3"/><path d="M2.2 7.5L4.3 4.5L5 5.8H11.8M4.3 9.7H11.8" fill="none" stroke="#0f8a88" stroke-width="1"/></svg>
<div class="a tr" style="left:41px;top:696px">图例</div>
<svg width="10" height="10" style="left:5px;top:728px"><rect x="0.5" y="0.5" width="8.5" height="8.5" rx="1" fill="#f2f2f2" stroke="#9a9a9a"/><path d="M2.5 4.5h4M4.5 2.5v4" stroke="#3d4fb5" stroke-width="1.2"/></svg>
<svg width="14" height="15" style="left:21px;top:725px"><path d="M1.5 1h7l3.5 3.5v9h-10.5zM8.5 1v3.5h3.5" fill="none" stroke="#0f8a88" stroke-width="1.2"/><path d="M3.8 7.5h5.2M3.8 10h5.2" stroke="#0f8a88" stroke-width="1"/></svg>
<div class="a tr" style="left:41px;top:720px">清单</div>
<svg width="10" height="10" style="left:5px;top:752px"><rect x="0.5" y="0.5" width="8.5" height="8.5" rx="1" fill="#f2f2f2" stroke="#9a9a9a"/><path d="M2.5 4.5h4" stroke="#3d4fb5" stroke-width="1.4"/></svg>
<svg width="14" height="15" style="left:21px;top:749px"><path d="M2.5 1h9q1.5 0 1.5 1.5v10q0 1.5-1.5 1.5h-9q-1.5 0-1.5-1.5v-10q0-1.5 1.5-1.5zM3 1v13M11 1v13" fill="none" stroke="#0f8a88" stroke-width="1.2"/></svg>
<div class="a tr" style="left:41px;top:744px">图纸集</div>
<svg width="10" height="10" style="left:24px;top:776px"><rect x="0.5" y="0.5" width="8.5" height="8.5" rx="1" fill="#f2f2f2" stroke="#9a9a9a"/><path d="M2.5 4.5h4" stroke="#3d4fb5" stroke-width="1.4"/></svg>
<svg width="14" height="15" style="left:40px;top:773px"><path d="M1 14v-12.5h5l1 1.5h6v11" fill="none" stroke="#0f8a88" stroke-width="1.3"/></svg>
<div class="a tr" style="left:60px;top:768px">默认图纸集</div>
</div>
<div class="a" style="left:296px;top:190px;width:17px;height:783px;background:#e4e4e4"></div>
<div class="a" style="left:296px;top:190px;width:17px;height:17px;background:#fdfdfd;border:1px solid #b9b9b9"></div>
<svg width="17" height="17" style="left:296px;top:190px"><path d="M4.5 11h8l-4-4.5z" fill="#707070"/></svg>
<div class="a" style="left:296px;top:207px;width:17px;height:648px;background:#fdfdfd;border:1px solid #b9b9b9"></div>
<div class="a" style="left:296px;top:956px;width:17px;height:17px;background:#fdfdfd;border:1px solid #b9b9b9"></div>
<svg width="17" height="17" style="left:296px;top:956px"><path d="M4.5 6.5h8l-4 4.5z" fill="#707070"/></svg>
<div class="a" style="left:313px;top:152px;width:3px;height:849px;background:#dadada"></div>
<div class="a" style="left:0;top:973px;width:313px;height:29px;background:#e5e5e5;border-top:5px solid #ececec"></div>
<div class="a" style="left:0;top:978px;width:65px;height:22px;background:#fff"></div>
<div class="a" style="left:-1px;top:981px;font-size:12px;color:#222;white-space:nowrap">视图浏览器</div>
<div class="a" style="left:72px;top:981px;font-size:12px;color:#666;white-space:nowrap">属性</div><div class="a" style="left:316px;top:152px;width:1105px;height:818px;background:#fff"></div>
<svg width="1421" height="1030" style="left:0;top:0" viewBox="0 0 1421 1030">
<defs><clipPath id="cv"><rect x="316" y="152" width="1105" height="818"/></clipPath><clipPath id="colc"><rect x="977" y="233" width="12" height="12"/><rect x="1120" y="233" width="12" height="12"/><rect x="1263" y="233" width="12" height="12"/><rect x="977" y="340" width="12" height="12"/><rect x="1120" y="340" width="12" height="12"/><rect x="1263" y="340" width="12" height="12"/><rect x="977" y="555" width="12" height="12"/><rect x="1120" y="555" width="12" height="12"/><rect x="1263" y="555" width="12" height="12"/><rect x="977" y="662" width="12" height="12"/><rect x="1120" y="662" width="12" height="12"/><rect x="1263" y="662" width="12" height="12"/><rect x="978" y="448" width="12" height="12"/><rect x="1120" y="448" width="12" height="12"/><rect x="1263" y="448" width="12" height="12"/><rect x="549" y="769" width="12" height="12"/><rect x="691" y="769" width="12" height="12"/><rect x="834" y="769" width="12" height="12"/></clipPath></defs>
<g clip-path="url(#cv)">
<g shape-rendering="crispEdges">
<path d="M554.5 178V792" stroke="#ff0000" stroke-dasharray="36 3 1.7 2.5" stroke-dashoffset="13"/>
<path d="M554.5 178V197" stroke="#ff0000"/>
<path d="M697.5 178V792" stroke="#ff0000" stroke-dasharray="36 3 1.7 2.5" stroke-dashoffset="13"/>
<path d="M697.5 178V197" stroke="#ff0000"/>
<path d="M840.5 178V792" stroke="#ff0000" stroke-dasharray="36 3 1.7 2.5" stroke-dashoffset="13"/>
<path d="M840.5 178V197" stroke="#ff0000"/>
<path d="M983.5 178V792" stroke="#ff0000" stroke-dasharray="36 3 1.7 2.5" stroke-dashoffset="13"/>
<path d="M983.5 178V197" stroke="#ff0000"/>
<path d="M1126.5 178V792" stroke="#ff0000" stroke-dasharray="36 3 1.7 2.5" stroke-dashoffset="13"/>
<path d="M1126.5 178V197" stroke="#ff0000"/>
<path d="M1269.5 178V792" stroke="#ff0000" stroke-dasharray="36 3 1.7 2.5" stroke-dashoffset="13"/>
<path d="M1269.5 178V197" stroke="#ff0000"/>
<path d="M926.5 751V792" stroke="#ff0000"/>
<path d="M548 196.5H1288" stroke="#ff0000" stroke-dasharray="36 3 1.7 2.5" stroke-dashoffset="21"/>
<path d="M1277 196.5H1288" stroke="#ff0000"/>
<path d="M548 238.5H1288" stroke="#ff0000" stroke-dasharray="36 3 1.7 2.5" stroke-dashoffset="21"/>
<path d="M1277 238.5H1288" stroke="#ff0000"/>
<path d="M548 346.5H1288" stroke="#ff0000" stroke-dasharray="36 3 1.7 2.5" stroke-dashoffset="21"/>
<path d="M1277 346.5H1288" stroke="#ff0000"/>
<path d="M548 453.5H1288" stroke="#ff0000" stroke-dasharray="36 3 1.7 2.5" stroke-dashoffset="21"/>
<path d="M1277 453.5H1288" stroke="#ff0000"/>
<path d="M548 560.5H1288" stroke="#ff0000" stroke-dasharray="36 3 1.7 2.5" stroke-dashoffset="21"/>
<path d="M1277 560.5H1288" stroke="#ff0000"/>
<path d="M548 667.5H1288" stroke="#ff0000" stroke-dasharray="36 3 1.7 2.5" stroke-dashoffset="21"/>
<path d="M1277 667.5H1288" stroke="#ff0000"/>
<path d="M536 710.5H1288" stroke="#ff0000" stroke-dasharray="36 3 1.7 2.5" stroke-dashoffset="9"/>
<path d="M1277 710.5H1288" stroke="#ff0000"/>
<path d="M536 775.5H1288" stroke="#ff0000" stroke-dasharray="36 3 1.7 2.5" stroke-dashoffset="9"/>
<path d="M1277 775.5H1288" stroke="#ff0000"/>
<path d="M536 710.5H549M536 775.5H549" stroke="#ff0000"/>
<path d="M554.5 154V178M554.5 792V864" stroke="#00f000"/>
<path d="M697.5 154V178M697.5 792V864" stroke="#00f000"/>
<path d="M840.5 154V178M840.5 792V864" stroke="#00f000"/>
<path d="M983.5 154V178M983.5 792V864" stroke="#00f000"/>
<path d="M1126.5 154V178M1126.5 792V864" stroke="#00f000"/>
<path d="M1269.5 154V178M1269.5 792V864" stroke="#00f000"/>
<path d="M753.5 154V176M926.5 792V864" stroke="#00f000"/>
<path d="M1288 196.5H1358" stroke="#00f000"/>
<path d="M1288 238.5H1358" stroke="#00f000"/>
<path d="M1288 346.5H1358" stroke="#00f000"/>
<path d="M1288 453.5H1358" stroke="#00f000"/>
<path d="M1288 560.5H1358" stroke="#00f000"/>
<path d="M1288 667.5H1358" stroke="#00f000"/>
<path d="M1288 710.5H1358" stroke="#00f000"/>
<path d="M1288 775.5H1358" stroke="#00f000"/>
<path d="M465 710.5H536M465 775.5H536" stroke="#00f000"/>
<g fill="none" stroke="#f000f0">
<path d="M871 194.5H1026" stroke-dasharray="7 1.5"/>
<path d="M546.5 758V783.5H568M692 783.5H713M834 783.5H849M849.5 711V783"/>
<path d="M926.5 708V548.5H1128.5V708"/>
<path d="M888.5 196V242.5H871"/>
<path d="M871 301.5H879.5V340.5H871"/>
<rect x="960.5" y="440.5" width="46" height="25"/>
<rect x="1245.5" y="428.5" width="29" height="46"/>
<path d="M921 711.5H943M1261 712H1278.5V696M1275.5 696V710"/>
</g>
<rect x="943.5" y="566.5" width="28" height="81" fill="none" stroke="#00c000"/>
<path d="M931 579.5H983M931 584.5H983M931 589.5H983M931 594.5H983M931 599.5H983M931 604.5H983M931 609.5H983M931 614.5H983M931 619.5H983M931 624.5H983M931 629.5H983M931 634.5H983" stroke="#ff00ff" stroke-width="1"/>
<path d="M931 660.5H983" stroke="#ff00ff"/>
<path d="M957.5 579V636" stroke="#0060ff" stroke-width="1.5"/>
</g>
<path d="M962 610l10-3 10-2M965 606l6 6M971 606l-6 6" stroke="#ff40ff" stroke-width="1.3" fill="none"/>
<path d="M548 196H1277V710H848V781H548ZM860 198h23.5v39.5h-23.5zM866 305h10.5v32.5h-10.5zM931 552h53v156h-53zM989 552h135v156h-135zM963 444h17v19h-17zM984 444h19v19h-19zM1248 431h26v42h-26z" fill="#76305c" fill-opacity="0.46" fill-rule="evenodd"/>
<path d="M860 198h23.5v39.5h-23.5z" fill="#670109" fill-opacity="0.46"/>
<path d="M866 305h10.5v32.5h-10.5z" fill="#2c1f76" fill-opacity="0.46"/>
<path d="M931 552h53v156h-53z" fill="#422876" fill-opacity="0.46"/>
<path d="M989 552h135v156h-135z" fill="#7f0572" fill-opacity="0.46"/>
<path d="M963 444h17v19h-17zM984 444h19v19h-19z" fill="#39427f" fill-opacity="0.46"/>
<path d="M1248 431h26v42h-26z" fill="#30396d" fill-opacity="0.46"/>
<g shape-rendering="crispEdges">
<rect x="977" y="233" width="12" height="12" fill="#e0c6d4"/>
<rect x="1120" y="233" width="12" height="12" fill="#e0c6d4"/>
<rect x="1263" y="233" width="12" height="12" fill="#e0c6d4"/>
<rect x="977" y="340" width="12" height="12" fill="#e0c6d4"/>
<rect x="1120" y="340" width="12" height="12" fill="#e0c6d4"/>
<rect x="1263" y="340" width="12" height="12" fill="#e0c6d4"/>
<rect x="977" y="555" width="12" height="12" fill="#e0c6d4"/>
<rect x="1120" y="555" width="12" height="12" fill="#e0c6d4"/>
<rect x="1263" y="555" width="12" height="12" fill="#e0c6d4"/>
<rect x="977" y="662" width="12" height="12" fill="#e0c6d4"/>
<rect x="1120" y="662" width="12" height="12" fill="#e0c6d4"/>
<rect x="1263" y="662" width="12" height="12" fill="#e0c6d4"/>
<rect x="978" y="448" width="12" height="12" fill="#e0c6d4"/>
<rect x="1120" y="448" width="12" height="12" fill="#e0c6d4"/>
<rect x="1263" y="448" width="12" height="12" fill="#e0c6d4"/>
<rect x="549" y="769" width="12" height="12" fill="#e0c6d4"/>
<rect x="691" y="769" width="12" height="12" fill="#e0c6d4"/>
<rect x="834" y="769" width="12" height="12" fill="#e0c6d4"/>
<g clip-path="url(#colc)">
<path d="M554.5 178V792" stroke="#f01020" stroke-dasharray="36 3 1.7 2.5" stroke-dashoffset="13"/>
<path d="M554.5 178V197" stroke="#f01020"/>
<path d="M697.5 178V792" stroke="#f01020" stroke-dasharray="36 3 1.7 2.5" stroke-dashoffset="13"/>
<path d="M697.5 178V197" stroke="#f01020"/>
<path d="M840.5 178V792" stroke="#f01020" stroke-dasharray="36 3 1.7 2.5" stroke-dashoffset="13"/>
<path d="M840.5 178V197" stroke="#f01020"/>
<path d="M983.5 178V792" stroke="#f01020" stroke-dasharray="36 3 1.7 2.5" stroke-dashoffset="13"/>
<path d="M983.5 178V197" stroke="#f01020"/>
<path d="M1126.5 178V792" stroke="#f01020" stroke-dasharray="36 3 1.7 2.5" stroke-dashoffset="13"/>
<path d="M1126.5 178V197" stroke="#f01020"/>
<path d="M1269.5 178V792" stroke="#f01020" stroke-dasharray="36 3 1.7 2.5" stroke-dashoffset="13"/>
<path d="M1269.5 178V197" stroke="#f01020"/>
<path d="M926.5 751V792" stroke="#f01020"/>
<path d="M548 196.5H1288" stroke="#f01020" stroke-dasharray="36 3 1.7 2.5" stroke-dashoffset="21"/>
<path d="M1277 196.5H1288" stroke="#f01020"/>
<path d="M548 238.5H1288" stroke="#f01020" stroke-dasharray="36 3 1.7 2.5" stroke-dashoffset="21"/>
<path d="M1277 238.5H1288" stroke="#f01020"/>
<path d="M548 346.5H1288" stroke="#f01020" stroke-dasharray="36 3 1.7 2.5" stroke-dashoffset="21"/>
<path d="M1277 346.5H1288" stroke="#f01020"/>
<path d="M548 453.5H1288" stroke="#f01020" stroke-dasharray="36 3 1.7 2.5" stroke-dashoffset="21"/>
<path d="M1277 453.5H1288" stroke="#f01020"/>
<path d="M548 560.5H1288" stroke="#f01020" stroke-dasharray="36 3 1.7 2.5" stroke-dashoffset="21"/>
<path d="M1277 560.5H1288" stroke="#f01020"/>
<path d="M548 667.5H1288" stroke="#f01020" stroke-dasharray="36 3 1.7 2.5" stroke-dashoffset="21"/>
<path d="M1277 667.5H1288" stroke="#f01020"/>
<path d="M536 710.5H1288" stroke="#f01020" stroke-dasharray="36 3 1.7 2.5" stroke-dashoffset="9"/>
<path d="M1277 710.5H1288" stroke="#f01020"/>
<path d="M536 775.5H1288" stroke="#f01020" stroke-dasharray="36 3 1.7 2.5" stroke-dashoffset="9"/>
<path d="M1277 775.5H1288" stroke="#f01020"/>
<path d="M536 710.5H549M536 775.5H549" stroke="#f01020"/>
</g>
<rect x="977.5" y="233.5" width="11" height="11" fill="none" stroke="#000"/>
<rect x="1120.5" y="233.5" width="11" height="11" fill="none" stroke="#000"/>
<rect x="1263.5" y="233.5" width="11" height="11" fill="none" stroke="#000"/>
<rect x="977.5" y="340.5" width="11" height="11" fill="none" stroke="#000"/>
<rect x="1120.5" y="340.5" width="11" height="11" fill="none" stroke="#000"/>
<rect x="1263.5" y="340.5" width="11" height="11" fill="none" stroke="#000"/>
<rect x="977.5" y="555.5" width="11" height="11" fill="none" stroke="#000"/>
<rect x="1120.5" y="555.5" width="11" height="11" fill="none" stroke="#000"/>
<rect x="1263.5" y="555.5" width="11" height="11" fill="none" stroke="#000"/>
<rect x="977.5" y="662.5" width="11" height="11" fill="none" stroke="#000"/>
<rect x="1120.5" y="662.5" width="11" height="11" fill="none" stroke="#000"/>
<rect x="1263.5" y="662.5" width="11" height="11" fill="none" stroke="#000"/>
<rect x="978.5" y="448.5" width="11" height="11" fill="none" stroke="#000"/>
<rect x="1120.5" y="448.5" width="11" height="11" fill="none" stroke="#000"/>
<rect x="1263.5" y="448.5" width="11" height="11" fill="none" stroke="#000"/>
<rect x="549.5" y="769.5" width="11" height="11" fill="none" stroke="#000"/>
<rect x="691.5" y="769.5" width="11" height="11" fill="none" stroke="#000"/>
<rect x="834.5" y="769.5" width="11" height="11" fill="none" stroke="#000"/>
<g fill="none" stroke="#00f0ff">
<path d="M801.5 195V162.5H1276.5V195M801.5 167.5H1276.5"/>
<path d="M545.5 783V817.5H854.5V783M545.5 812.5H849.5V783"/>
<path d="M849.5 739.5H1278M849.5 744.5H1278.5V711"/>
<path d="M545.5 684V783"/>
<path d="M1212 194.5H1276"/>
</g>
<path d="M1026 194.5H1041M1277.5 198V711" stroke="#00f000"/>
<path d="M849 710.5H1277" stroke="#fff"/>
<path d="M849 712H921M989 712H1124M1127 712H1261" stroke="#00f0ff" stroke-width="2"/>
<path d="M568 782H692M713 782H834" stroke="#2a90c8" stroke-width="1"/>
<g fill="none" stroke="#000">
<path d="M871 197H1275.5V474" stroke-width="2.5"/>
<path d="M1274.5 474V709M1276.5 474V711" stroke-width="1"/>
<path d="M1277 709.5H847.5V781.5H548.5V684" stroke-width="1.2"/><path d="M1274 708.5H848.5" stroke-width="1"/>
<path d="M848.5 711V779.5H550.5V684" stroke-width="1"/>
<path d="M928.5 708V549.5H1127.5V708M930.5 708V551.5H985.5V708M988.5 708V551.5H1124.5V708" stroke-width="1"/>
<path d="M884 197V238.5H871M887 197V241H871" stroke-width="1.3"/>
<path d="M871 304H876.5V338.5H871M871 303H878.2V339.5H871" stroke-width="1.2"/>
<rect x="961.5" y="442.5" width="43" height="21" stroke-width="1.3"/>
<path d="M963.5 444.5H980.5V462.5H963.5ZM983.5 444.5H1003.5V462.5H983.5Z" stroke-width="1"/>
<rect x="1247.5" y="430.5" width="27" height="43" stroke-width="1.5"/><path d="M1247.5 453.5H1274"/>
<path d="M971.5 568V646M969 569.5h5M969 645.5h5" stroke-width="0.8"/>
</g>
</g>
<g fill="none" stroke="#00f0ff" stroke-width="1">
<path d="M1040.5 194.5V174.5 A21.0 20 0 0 1 1061.5 194.5 A21.0 20 0 0 1 1082.5 174.5 V194.5"/>
<path d="M1169.5 194.5V174.5 A21.5 20 0 0 1 1191.0 194.5 A21.5 20 0 0 1 1212.5 174.5 V194.5"/>
<path d="M609.5 783V802.5 A20.5 19.5 0 0 0 630.0 783 A20.5 19.5 0 0 0 650.5 802.5 V783"/>
<path d="M754.5 783V802.5 A20.5 19.5 0 0 0 775.0 783 A20.5 19.5 0 0 0 795.5 802.5 V783"/>
<path d="M943.5 711V725 A14.5 14 0 0 0 958.0 711 A14.5 14 0 0 0 972.5 725 V711"/>
<path d="M1038.5 711V731.5 A20.5 20.5 0 0 0 1059.0 711 A20.5 20.5 0 0 0 1079.5 731.5 V711"/>
<path d="M1178.5 711V731.5 A20.5 20.5 0 0 0 1199.0 711 A20.5 20.5 0 0 0 1219.5 731.5 V711"/>
</g>
<path d="M930 674A15 15 0 0 1 945 689H930" fill="none" stroke="#40a8c8" stroke-width="1"/>
<path d="M987.5 440L992 433L997 440" fill="none" stroke="#40a8c8" stroke-width="1"/>
<circle cx="1365.5" cy="196.5" r="7" fill="#fff" stroke="#00f000" stroke-width="1" stroke-dasharray="3 0.6"/><text x="1365.5" y="200.6" font-family="Liberation Serif" font-weight="bold" font-size="11.5" text-anchor="middle" fill="#000">H</text>
<circle cx="1365.5" cy="238.5" r="7" fill="#fff" stroke="#00f000" stroke-width="1" stroke-dasharray="3 0.6"/><text x="1365.5" y="242.6" font-family="Liberation Serif" font-weight="bold" font-size="11.5" text-anchor="middle" fill="#000">G</text>
<circle cx="1365.5" cy="346.5" r="7" fill="#fff" stroke="#00f000" stroke-width="1" stroke-dasharray="3 0.6"/><text x="1365.5" y="350.6" font-family="Liberation Serif" font-weight="bold" font-size="11.5" text-anchor="middle" fill="#000">F</text>
<circle cx="1365.5" cy="453.5" r="7" fill="#fff" stroke="#00f000" stroke-width="1" stroke-dasharray="3 0.6"/><text x="1365.5" y="457.6" font-family="Liberation Serif" font-weight="bold" font-size="11.5" text-anchor="middle" fill="#000">E</text>
<circle cx="1365.5" cy="560.5" r="7" fill="#fff" stroke="#00f000" stroke-width="1" stroke-dasharray="3 0.6"/><text x="1365.5" y="564.6" font-family="Liberation Serif" font-weight="bold" font-size="11.5" text-anchor="middle" fill="#000">D</text>
<circle cx="1365.5" cy="667.5" r="7" fill="#fff" stroke="#00f000" stroke-width="1" stroke-dasharray="3 0.6"/><text x="1365.5" y="671.6" font-family="Liberation Serif" font-weight="bold" font-size="11.5" text-anchor="middle" fill="#000">C</text>
<circle cx="1365.5" cy="710.5" r="7" fill="#fff" stroke="#00f000" stroke-width="1" stroke-dasharray="3 0.6"/><text x="1365.5" y="714.6" font-family="Liberation Serif" font-weight="bold" font-size="11.5" text-anchor="middle" fill="#000">B</text>
<circle cx="1365.5" cy="775.5" r="7" fill="#fff" stroke="#00f000" stroke-width="1" stroke-dasharray="3 0.6"/><text x="1365.5" y="779.6" font-family="Liberation Serif" font-weight="bold" font-size="11.5" text-anchor="middle" fill="#000">A</text>
<circle cx="457.5" cy="710.5" r="7" fill="#fff" stroke="#00f000" stroke-width="1" stroke-dasharray="3 0.6"/><text x="457.5" y="714.6" font-family="Liberation Serif" font-weight="bold" font-size="11.5" text-anchor="middle" fill="#000">B</text>
<circle cx="457.5" cy="775.5" r="7" fill="#fff" stroke="#00f000" stroke-width="1" stroke-dasharray="3 0.6"/><text x="457.5" y="779.6" font-family="Liberation Serif" font-weight="bold" font-size="11.5" text-anchor="middle" fill="#000">A</text>
<circle cx="554.5" cy="871.5" r="7" fill="#fff" stroke="#00f000" stroke-width="1" stroke-dasharray="3 0.6"/><text x="554.5" y="875.6" font-family="Liberation Serif" font-weight="bold" font-size="11.5" text-anchor="middle" fill="#000">1</text>
<circle cx="697.5" cy="871.5" r="7" fill="#fff" stroke="#00f000" stroke-width="1" stroke-dasharray="3 0.6"/><text x="697.5" y="875.6" font-family="Liberation Serif" font-weight="bold" font-size="11.5" text-anchor="middle" fill="#000">2</text>
<circle cx="840.5" cy="871.5" r="7" fill="#fff" stroke="#00f000" stroke-width="1" stroke-dasharray="3 0.6"/><text x="840.5" y="875.6" font-family="Liberation Serif" font-weight="bold" font-size="11.5" text-anchor="middle" fill="#000">3</text>
<circle cx="983.5" cy="871.5" r="7" fill="#fff" stroke="#00f000" stroke-width="1" stroke-dasharray="3 0.6"/><text x="983.5" y="875.6" font-family="Liberation Serif" font-weight="bold" font-size="11.5" text-anchor="middle" fill="#000">4</text>
<circle cx="1126.5" cy="871.5" r="7" fill="#fff" stroke="#00f000" stroke-width="1" stroke-dasharray="3 0.6"/><text x="1126.5" y="875.6" font-family="Liberation Serif" font-weight="bold" font-size="11.5" text-anchor="middle" fill="#000">5</text>
<circle cx="1269.5" cy="871.5" r="7" fill="#fff" stroke="#00f000" stroke-width="1" stroke-dasharray="3 0.6"/><text x="1269.5" y="875.6" font-family="Liberation Serif" font-weight="bold" font-size="11.5" text-anchor="middle" fill="#000">6</text>
<circle cx="926.5" cy="871.5" r="7" fill="#fff" stroke="#00f000"/><text x="926.5" y="874.5" font-family="Liberation Sans" font-size="7" text-anchor="middle" fill="#000">1/3</text>
<text x="895" y="874" font-family="Liberation Sans" font-size="6" fill="#888">M07外墙</text><path d="M909 867l1.5-1.5 1.5 1.5" stroke="#000" fill="none" stroke-width="0.8"/>
<path d="M554.5 718V769" stroke="#20b0a0" stroke-width="1.5"/>
<path d="M560 775H610" stroke="#ff0000" stroke-width="2.5"/>
<path d="M549 769H560V781H549ZM549 781L560 769" fill="none" stroke="#707070" stroke-width="1.3"/>
<path d="M549 698l5.5 5 5.5-5M554.5 703V708" fill="none" stroke="#707070" stroke-width="1.3"/>
<path d="M621 770l9 10M630 770l-9 10" fill="none" stroke="#707070" stroke-width="1.3"/>
<g font-family="Liberation Sans" fill="#000">
<text x="1053" y="207" font-size="7.5" textLength="18.5">M2429</text>
<text x="1181" y="207" font-size="7.5" textLength="19">M2429</text>
<text x="901" y="507" font-size="6.5" font-weight="bold">储藏</text>
<text x="897" y="515" font-size="7" font-weight="bold" textLength="19">848.24</text>
<text x="1035" y="644" font-size="6.5" font-weight="bold" textLength="26.5">10KV开关站</text>
<text x="1040" y="652.5" font-size="7" font-weight="bold" textLength="16">56.64</text>
<text x="948" y="681" font-size="6.5" font-weight="bold" textLength="15">1#楼梯</text>
<text x="948" y="689" font-size="7" font-weight="bold" textLength="15">23.36</text>
<text x="949" y="704.5" font-size="7.5" textLength="18">M1547</text>
<text x="1049" y="704.5" font-size="7.5" textLength="20">M7047</text>
<text x="1188" y="704.5" font-size="7.5" textLength="20">M7047</text>
<text x="876" y="704.5" font-size="7.5" textLength="18.5">C4047</text>
<text x="620" y="777" font-size="7.5" textLength="19.5">M7047</text>
<text x="765.5" y="777" font-size="7.5" textLength="18.5">M7047</text>
<text x="0" y="0" font-size="7.5" transform="translate(925.5,689) rotate(-90)" textLength="17">M0921</text>
<text x="0" y="0" font-size="7.5" transform="translate(541,731) rotate(-90)" textLength="19">C4047</text>
<text x="965" y="457" font-size="5.5" font-weight="bold">卫</text>
<text x="987" y="457" font-size="5.5" font-weight="bold">卫</text>
<text x="1256" y="441" font-size="5" font-weight="bold">风井</text>
<text x="1253" y="449.5" font-size="6" font-weight="bold">1.57</text>
<text x="1256" y="464" font-size="5" font-weight="bold">风井</text>
<text x="1255" y="472" font-size="6" font-weight="bold">1.56</text>
</g>
</g></svg><div class="a" style="left:316px;top:970px;width:1105px;height:1px;background:#d4d4d4"></div>
<div class="a" style="left:316px;top:971px;width:1105px;height:30px;background:#e6e6e6"></div>
<div class="a" style="left:315px;top:971px;width:646px;height:30px;background:#fdfdfd;border-radius:0 0 0 7px"></div>
<div class="a" style="left:961px;top:971px;width:145px;height:30px;background:#fdfdfd;border-radius:0 0 7px 0"></div>
<svg width="4" height="16" style="left:318px;top:978px"><circle cx="2" cy="2" r="1.1" fill="#888"/><circle cx="2" cy="7" r="1.1" fill="#888"/><circle cx="2" cy="12" r="1.1" fill="#888"/></svg>
<div class="a" style="left:331px;top:977px;font-size:12px;color:#555;white-space:nowrap">在此输入命令</div>
<div class="a" style="left:929px;top:977px;width:1px;height:17px;background:#c8c8c8"></div>
<svg width="12" height="8" style="left:940px;top:981px"><path d="M1.5 6l4.5-4.5 4.5 4.5" fill="none" stroke="#2a5a80" stroke-width="1.5"/></svg>
<svg width="4" height="16" style="left:964px;top:978px"><circle cx="2" cy="2" r="1.1" fill="#888"/><circle cx="2" cy="7" r="1.1" fill="#888"/><circle cx="2" cy="12" r="1.1" fill="#888"/></svg>
<div class="a" style="left:975px;top:976px;font-size:12px;color:#333;white-space:nowrap">绘制比例</div>
<div class="a" style="left:1031px;top:974px;width:71px;height:25px;background:#e8e8e8;border:1px solid #cfcfcf"></div>
<div class="a" style="left:1034px;top:977px;width:51px;height:20px;background:#fdfdfd"></div>
<div class="a" style="left:1036px;top:979px;font-size:12.5px;color:#444">1:1</div>
<svg width="8" height="5" style="left:1090px;top:985px"><path d="M0.5 0.5h6l-3 3.5z" fill="#a0a0a0"/></svg>
<div class="a" style="left:0;top:1001px;width:1421px;height:1px;background:#d8d8d8"></div>
<div class="a" style="left:0;top:1002px;width:1421px;height:28px;background:#f0f0f0"></div>
<div class="a" style="left:943px;top:1008px;font-size:12.5px;color:#333;white-space:nowrap;letter-spacing:0.1px">-12611.85 , 15758.98 , 0.00</div>
<svg width="500" height="28" style="left:0;top:1002px" viewBox="0 1002 500 28">
<g fill="none" stroke="#1b4f72" stroke-width="1.3" stroke-linejoin="round">
 <path d="M1.5 1008.5h6l1.5 2.5h7v12.5h-14.5z" fill="#dff4f7"/><path d="M10 1009.5h5M11 1010.5h3" stroke="#1ea3a8" stroke-width="1"/>
 <path d="M30 1008.5h-2.5v15h2.5M40 1008.5h2.5v15h-2.5"/><path d="M30.8 1010.8h3.4v11.4h-3.4zM35.8 1010.8h3.4v11.4h-3.4z" fill="#fff" stroke-width="1.1"/><path d="M31 1012.5h3M36 1012.5h3" stroke="#1ea3a8" stroke-width="0.8"/>
 <path d="M53.5 1008.5h15v8M53.5 1008.5v15h8M53.5 1012h15M56 1010.3h1M58 1010.3h1"/>
 <path d="M64 1019v6M61 1022h6" stroke="#1ea3a8"/>
 <path d="M86.5 1012v-3.5h3.5M98.5 1008.5h3.5v3.5M86.5 1020v3.5h3.5M98.5 1023.5h3.5v-3.5"/>
 <path d="M94 1011v10M89 1016h10" stroke-width="2.2"/>
 <path d="M115 1019v-7q0-1.3 1.2-1.3t1.2 1.3v4M117.5 1015v-5q0-1.3 1.2-1.3t1.2 1.3v5M120 1015v-4.5q0-1.3 1.2-1.3t1.2 1.3v5M122.5 1015v-2.5q0-1.3 1.2-1.3t1.2 1.3v6q0 5-5 5h-1.5q-2.5 0-4-2.5l-2.5-4q-.8-1.5.5-2t2 1l1.5 2"/>
 <path d="M146 1008.8Q148.5 1013.5 154 1015.8Q148.5 1018.2 146 1023Q143.5 1018.2 138.3 1015.8Q143.5 1013.5 146 1008.8z"/><path d="M149.5 1013.5l-2.5 0.5 0.5-2.5M142.5 1018l2.5-0.5-0.5 2.5" stroke-width="1.1"/>
 <circle cx="170" cy="1014.5" r="5.3"/><path d="M174 1018.5l4.5 4.5"/><circle cx="170" cy="1014.5" r="3" stroke="#1ea3a8" stroke-dasharray="1.2 1.2"/>
</g>
<path d="M77.5 1007v17M188.5 1007v17M325.5 1007v17M384.5 1007v17" stroke="#cfcfcf"/>
<g fill="#dff4f7" stroke="#1b4f72" stroke-width="1.2" stroke-linejoin="round">
 <path d="M198.5 1012l6.5-3.5 6.5 3.5v7.5l-6.5 3.5-6.5-3.5z" fill="#fff"/><path d="M198.5 1012l6.5 3.5 6.5-3.5M205 1015.5v7.5" fill="none"/>
 <path d="M224.5 1012l6.5-3.5 6.5 3.5v7.5l-6.5 3.5-6.5-3.5z" fill="#fff"/><path d="M224.5 1012l6.5 3.5 6.5-3.5M231 1015.5v7.5M224.5 1019.5l6.5-3.5 6.5 3.5M231 1008.5v7.5" fill="none" stroke-width="0.9"/>
</g>
<rect x="247.5" y="1006.5" width="19" height="19" fill="#b9ded8" stroke="#3a8f7f" stroke-width="1"/>
<g fill="#cfe4ea" stroke="#1b4f72" stroke-width="1.2" stroke-linejoin="round">
 <path d="M250.5 1012l6.5-3.5 6.5 3.5v7.5l-6.5 3.5-6.5-3.5z"/><path d="M250.5 1012l6.5 3.5 6.5-3.5M257 1015.5v7.5" fill="none"/>
 <path d="M276.5 1012l6.5-3.5 6.5 3.5v7.5l-6.5 3.5-6.5-3.5z" fill="#b8d8e4" stroke="#3a7fa8"/><path d="M276.5 1012l6.5 3.5 6.5-3.5M283 1015.5v7.5" fill="none" stroke="#3a7fa8"/>
</g>
<path d="M302.5 1012l6.5-3.5 6.5 3.5v7.5l-6.5 3.5-6.5-3.5z" fill="#c8e4ea"/><path d="M302.5 1012l6.5 3.5v7.5l-6.5-3.5z" fill="#a8c4cc"/><path d="M302.5 1012l6.5-3.5 6.5 3.5-6.5 3.5z" fill="#e6f4f6"/>
<rect x="332.5" y="1006.5" width="19" height="19" fill="#b9ded8" stroke="#3a8f7f" stroke-width="1.2"/>
<path d="M335 1011h6M335 1015.5h5M335 1020h4" stroke="#1b4f72" stroke-width="1.3"/>
<path d="M348.5 1009l-8 14" stroke="#1ea3a8" stroke-width="1.3"/>
<path d="M344 1011h5.5v3h-7zM342 1015.5h7.5v3h-9zM340 1020h9.5v3h-11z" fill="#1ea3a8"/>
<path d="M364 1014.5l4.5-4 4.5 4M364 1019l4.5-4 4.5 4" fill="none" stroke="#2a5a80" stroke-width="1.4"/>
<path d="M397 1016h8" stroke="#8a8a8a" stroke-width="1.6"/>
<path d="M414 1016h61" stroke="#9a9a9a" stroke-width="1"/>
<rect x="442.5" y="1010.5" width="4" height="11" fill="#f5f5f5" stroke="#8a8a8a"/>
<path d="M485 1016h8M489 1012v8" stroke="#8a8a8a" stroke-width="1.6"/>
</svg>
<div class="a" style="left:100px;top:362px;width:194px;height:177px;background:#fafafa;border:1px solid #e0e0e0;border-radius:4px;box-shadow:1px 2px 4px rgba(0,0,0,0.22)"></div>
<div class="a mi" style="left:138px;top:366px">打开楼层三维</div>
<div class="a mi" style="left:138px;top:388px">刷新视图</div>
<div class="a mi" style="left:138px;top:419px">复制视图</div>
<div class="a mi" style="left:138px;top:441px">复制视图（批量）</div>
<div class="a mi" style="left:138px;top:463px">重命名</div>
<div class="a mi" style="left:138px;top:485px">生成图纸</div>
<div class="a" style="left:109px;top:510px;width:176px;height:1px;background:#dcdcdc"></div>
<div class="a mi" style="left:138px;top:516px">新建视窗</div>
<div class="a" style="left:100px;top:413px;width:197px;height:52px;border:2px solid #e0141e"></div>
<div class="a" style="left:343px;top:176px;width:529px;height:508px;background:#efefef;border:1px solid #c4c4c4;border-radius:8px;box-shadow:0 1px 5px rgba(0,0,0,0.13);overflow:hidden">
<div class="a" style="left:0;top:0;width:529px;height:30px;background:#eef2f9"></div>
</div>
<div class="a" style="left:353px;top:182px;font-size:12px;color:#1a1a1a;white-space:nowrap">复制视图</div>
<svg width="14" height="14" style="left:849px;top:184px"><path d="M2.3 2.3l9.8 9.8M12.1 2.3l-9.8 9.8" stroke="#111" stroke-width="1.2"/></svg>
<div class="a" style="left:365px;top:239px;width:262px;height:19px;background:#d4d4d4"></div>
<div class="a" style="left:371px;top:240px;font-size:12px;color:#555;white-space:nowrap">视图选择</div>
<div class="a" style="left:650px;top:239px;width:193px;height:19px;background:#d4d4d4"></div>
<div class="a" style="left:656px;top:240px;font-size:12px;color:#555;white-space:nowrap">复制项选择</div>
<div class="a" style="left:365px;top:261px;width:246px;height:375px;background:#fff;overflow:hidden">
<div class="a" style="left:4px;top:26px;width:240px;height:21px;background:#e6f2ee"></div>
<div class="a" style="left:33px;top:19px;width:1px;height:360px;background:#d0d0d0"></div>
<div class="a" style="left:50px;top:43px;width:1px;height:142px;background:#d0d0d0"></div>
<div class="a" style="left:50px;top:211px;width:1px;height:170px;background:#d0d0d0"></div>
<svg width="14" height="10" style="left:27px;top:8px"><path d="M1.5 2l5.5 5.5 5.5-5.5" fill="none" stroke="#555" stroke-width="1.3"/></svg>
<div class="cb" style="left:44px;top:6px"></div>
<div class="a dt" style="left:63px;top:1px">模型空间</div>
<svg width="14" height="10" style="left:44px;top:32px"><path d="M1.5 2l5.5 5.5 5.5-5.5" fill="none" stroke="#555" stroke-width="1.3"/></svg>
<div class="cb" style="left:61px;top:30px;border-color:#2f8a78"><div class="a" style="left:2px;top:2px;width:7px;height:7px;background:#2f8a78"></div></div>
<div class="a dt" style="left:80px;top:25px">楼层平面</div>
<svg width="13" height="13" style="left:80px;top:54px"><rect width="13" height="13" fill="#2f8a78"/><path d="M2.8 6.8l2.6 2.6 5-5.4" fill="none" stroke="#fff" stroke-width="1.6"/></svg>
<div class="a dt" style="left:99px;top:49px;font-size:12px">ROOF</div>
<svg width="13" height="13" style="left:80px;top:78px"><rect width="13" height="13" fill="#2f8a78"/><path d="M2.8 6.8l2.6 2.6 5-5.4" fill="none" stroke="#fff" stroke-width="1.6"/></svg>
<div class="a dt" style="left:99px;top:73px;font-size:12px">4F</div>
<svg width="13" height="13" style="left:80px;top:102px"><rect width="13" height="13" fill="#2f8a78"/><path d="M2.8 6.8l2.6 2.6 5-5.4" fill="none" stroke="#fff" stroke-width="1.6"/></svg>
<div class="a dt" style="left:99px;top:97px;font-size:12px">3F</div>
<svg width="13" height="13" style="left:80px;top:126px"><rect width="13" height="13" fill="#2f8a78"/><path d="M2.8 6.8l2.6 2.6 5-5.4" fill="none" stroke="#fff" stroke-width="1.6"/></svg>
<div class="a dt" style="left:99px;top:121px;font-size:12px">2F</div>
<svg width="13" height="13" style="left:80px;top:150px"><rect width="13" height="13" fill="#2f8a78"/><path d="M2.8 6.8l2.6 2.6 5-5.4" fill="none" stroke="#fff" stroke-width="1.6"/></svg>
<div class="a dt" style="left:99px;top:145px;font-size:12px">1F</div>
<div class="cb" style="left:80px;top:174px"></div>
<div class="a dt" style="left:99px;top:169px">室外地坪层</div>
<svg width="14" height="10" style="left:44px;top:200px"><path d="M1.5 2l5.5 5.5 5.5-5.5" fill="none" stroke="#555" stroke-width="1.3"/></svg>
<div class="cb" style="left:61px;top:198px"></div>
<div class="a dt" style="left:80px;top:193px">三维模型</div>
<div class="cb" style="left:80px;top:222px"></div>
<div class="a dt" style="left:99px;top:217px">全楼</div>
<div class="cb" style="left:80px;top:246px"></div>
<div class="a dt" style="left:99px;top:241px;font-size:12px">ROOF</div>
<div class="cb" style="left:80px;top:270px"></div>
<div class="a dt" style="left:99px;top:265px;font-size:12px">4F</div>
<div class="cb" style="left:80px;top:294px"></div>
<div class="a dt" style="left:99px;top:289px;font-size:12px">3F</div>
<div class="cb" style="left:80px;top:318px"></div>
<div class="a dt" style="left:99px;top:313px;font-size:12px">2F</div>
<div class="cb" style="left:80px;top:342px"></div>
<div class="a dt" style="left:99px;top:337px;font-size:12px">1F</div>
<div class="cb" style="left:80px;top:366px"></div>
<div class="a dt" style="left:99px;top:361px">室外地坪层</div>
</div>
<div class="a" style="left:367px;top:285px;width:244px;height:144px;border:2px solid #e0141e"></div>
<div class="a" style="left:651px;top:280px;font-size:14.5px;font-weight:bold;font-family:'Liberation Serif',serif;color:#000;white-space:nowrap">复制项选择<span style="margin-left:3px">:</span></div>
<svg width="14" height="14" style="left:649px;top:331px"><circle cx="6.7" cy="7.3" r="5.3" fill="#fff" stroke="#3a8f7f" stroke-width="1"/><circle cx="6.7" cy="7.3" r="3" fill="#3a8f7f"/></svg>
<div class="a" style="left:665px;top:330px;font-size:12.5px;color:#2a2a2a;white-space:nowrap;letter-spacing:0.1px">仅复制模型</div>
<svg width="14" height="14" style="left:649px;top:368px"><circle cx="6.7" cy="7.3" r="5.3" fill="#fff" stroke="#9a9a9a" stroke-width="1"/></svg>
<div class="a" style="left:665px;top:367px;font-size:12.5px;color:#2a2a2a;white-space:nowrap;letter-spacing:0.1px">复制模型及注释</div>
<div class="a" style="left:645px;top:325px;width:200px;height:30px;border:2px solid #e0141e"></div>
<div class="a" style="left:668px;top:646px;width:84px;height:25px;background:#fff;border:2px solid #3a8f7f"></div>
<div class="a" style="left:698px;top:650px;font-size:12.5px;color:#222">确定</div>
<div class="a" style="left:768px;top:646px;width:81px;height:25px;background:#fff;border:1px solid #dcdcdc"></div>
<div class="a" style="left:797px;top:650px;font-size:12.5px;color:#222">取消</div>
</body></html>
